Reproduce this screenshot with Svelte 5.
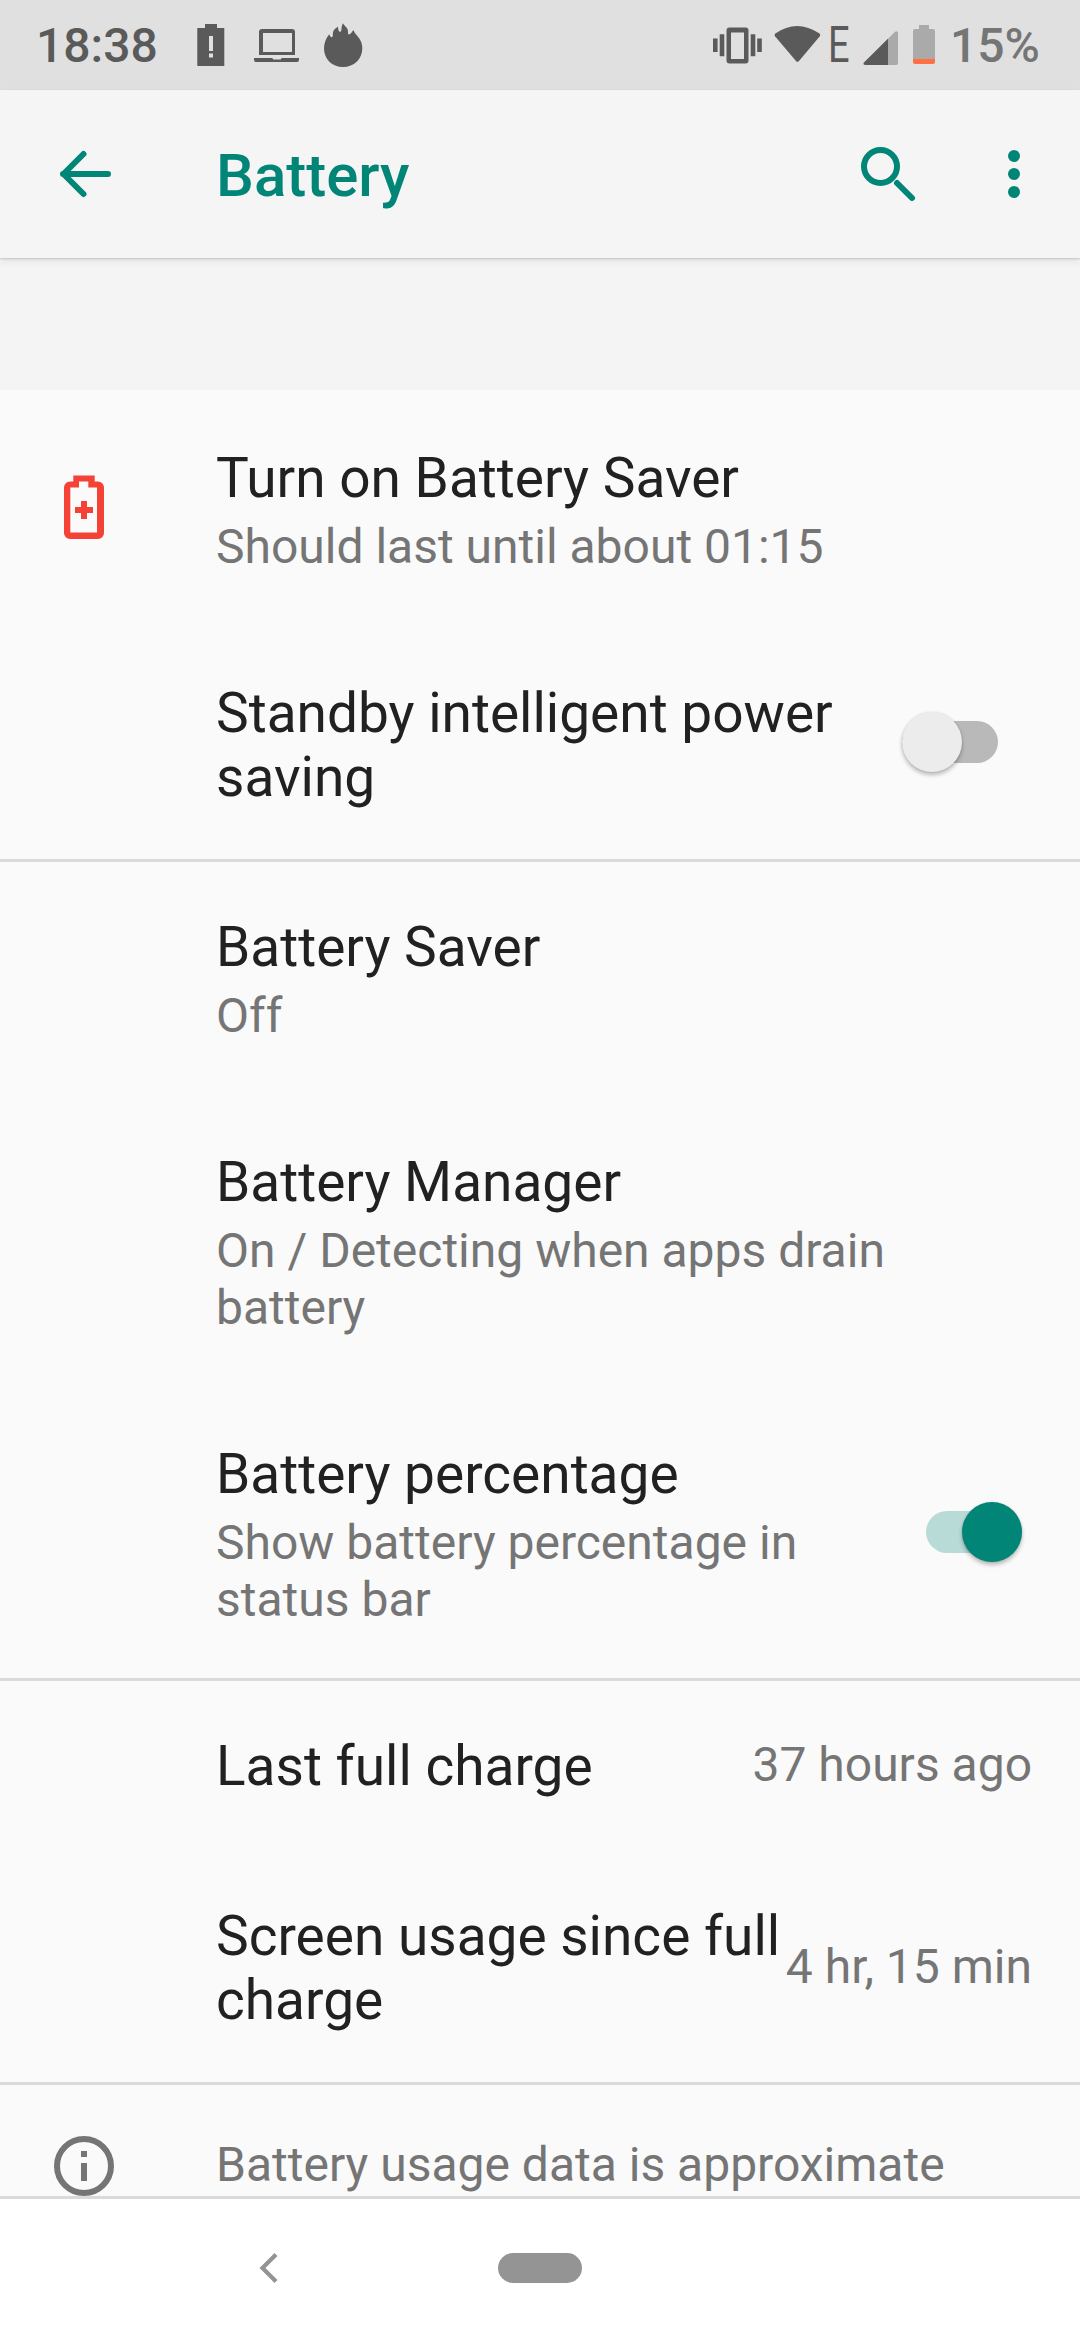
<script lang="ts">
	interface Row {
		title: string
		summary?: string
		value?: string
		icon?: string
		toggle?: boolean
		inset?: boolean
	}

	const sections: Row[][] = [
		[
			{ title: 'Turn on Battery Saver', summary: 'Should last until about 01:15', icon: 'battery' },
			{ title: 'Standby intelligent power saving', toggle: false, inset: true }
		],
		[
			{ title: 'Battery Saver', summary: 'Off' },
			{ title: 'Battery Manager', summary: 'On / Detecting when apps drain battery' },
			{ title: 'Battery percentage', summary: 'Show battery percentage in status bar', toggle: true }
		],
		[
			{ title: 'Last full charge', value: '37 hours ago' },
			{ title: 'Screen usage since full charge', value: '4 hr, 15 min' }
		]
	];
</script>

<div class="screen">
	<div class="status">
		<span class="clock">18:38</span>
		<svg width="180" height="90" viewBox="190 0 180 90" fill="#5a5a5a">
			<path fill-rule="evenodd" d="M205 24h12v4h7.300v38h-27v-38h7.700zM209 36v15h4v-15zM209 53.500v4h4v-4z" />
			<path fill-rule="evenodd" d="M262 29h30a3 3 0 0 1 3 3v23h-36v-23a3 3 0 0 1 3-3zM263 33v19h29v-19z" />
			<path d="M254 58h18.500q0 1.500 1.500 1.500h6q1.500 0 1.500-1.500h17.500v2a2 2 0 0 1-2 2h-41a2 2 0 0 1-2-2z" />
			<path d="M343 23.300C343.500 25 346.500 27 347.500 29C348.500 31.500 347.500 34.500 349 34.500C351 34 352 31.500 353.500 30C354 33 357 35 359 38C361.500 41.500 362.300 45 362.300 48.500C362.300 59 354 67 343 67C332 67 324 59 324 48.500C324 43 326 38 329.300 34.300C330 36.500 331 37.500 332.300 37C333.500 36 332 32.500 334 30C335.500 28 337 27.500 338 26.500C338 29 338.500 31.500 340 32C342.500 31.500 340.500 27.500 343 23.300z" />
		</svg>
		<div class="spacer"></div>
		<svg width="112" height="90" viewBox="712 0 112 90" fill="#5a5a5a">
			<path fill-rule="evenodd" d="M729.500 27.500h16a3 3 0 0 1 3 3v30a3 3 0 0 1-3 3h-16a3 3 0 0 1-3-3v-30a3 3 0 0 1 3-3zM731 32.500v26.500h13v-26.500z" />
			<path d="M713 38.500h4.600v13.500h-4.600zM719.700 34.300h4.600v22h-4.600zM750.700 34.300h4.600v22h-4.600zM757.200 38.500h4.600v13.500h-4.600z" />
			<path d="M775.300 33.500Q797 18.500 819.500 33.500Q820.800 34.800 819.800 36.300L799 61Q797.500 62.700 796 61L775 36.300Q774 34.800 775.300 33.500z" />
		</svg>
		<span class="network">E</span>
		<svg width="80" height="90" viewBox="860 0 80 90">
			<path fill="#aaa" d="M864 62.500L895 31.800Q898 30 898 33v30q0 2-2 2h-30q-3.500 0-2-2.500z" />
			<path fill="#5a5a5a" d="M864 62.500L888 38.700v26.300h-22q-3.500 0-2-2.500z" />
			<path fill="#aaa" d="M919 25h10v4h4q2 0 2 2v28h-22v-28q0-2 2-2h4z" />
			<path fill="#ff7043" d="M913 59h22v3q0 2-2 2h-18q-2 0-2-2z" />
		</svg>
		<span class="level">15%</span>
	</div>

	<header>
		<svg width="72" height="72" viewBox="48 138 72 72" fill="none" stroke="#008577" stroke-width="6" stroke-linecap="round" stroke-linejoin="round">
			<path d="M108 174H63M83.500 154L63.500 174L83.500 194" />
		</svg>
		<h1>Battery</h1>
		<div class="spacer"></div>
		<svg class="search" width="72" height="72" viewBox="852 138 72 72" fill="none" stroke="#008577" stroke-width="6" stroke-linecap="round">
			<circle cx="880.500" cy="166.500" r="16.500" />
			<path d="M897 183L912 198" />
		</svg>
		<svg width="36" height="72" viewBox="996 138 36 72" fill="#008577">
			<circle cx="1014" cy="156" r="6" />
			<circle cx="1014" cy="174" r="6" />
			<circle cx="1014" cy="192" r="6" />
		</svg>
	</header>

	<main>
		{#each sections as rows}
			<section>
				{#each rows as row}
					<div class="row">
						<div class="lead">
							{#if row.icon}
								<svg width="72" height="72" viewBox="0 1 72 72" fill="#f44336">
									<path fill-rule="evenodd" d="M25.300 4.500h21.400v6h3.300a6 6 0 0 1 6 6v45.500a6 6 0 0 1-6 6h-28a6 6 0 0 1-6-6v-45.500a6 6 0 0 1 6-6h3.300zM31 10.500v6h-8.700v45h26.700v-45h-8.700v-6z" />
									<path d="M33 30h6v6h6v6h-6v6h-6v-6h-6v-6h6z" />
								</svg>
							{/if}
						</div>
						<div class="text">
							<div class="title">{row.title}</div>
							{#if row.summary}
								<div class="summary">{row.summary}</div>
							{/if}
						</div>
						{#if row.value}
							<div class="value">{row.value}</div>
						{/if}
						{#if row.toggle !== undefined}
							<div class="switch" class:on={row.toggle} class:inset={row.inset}>
								<div class="thumb"></div>
							</div>
						{/if}
					</div>
				{/each}
			</section>
		{/each}
		<section class="footer">
			<div class="lead">
				<svg width="72" height="72" viewBox="0 0 72 72">
					<circle cx="36" cy="36" r="27" fill="none" stroke="#757575" stroke-width="6" />
					<path fill="#757575" d="M33 21h6v6h-6zM33 33h6v18h-6z" />
				</svg>
			</div>
			<div class="summary">Battery usage data is approximate</div>
		</section>
	</main>

	<nav>
		<svg width="24" height="36" viewBox="0 0 24 36" fill="none" stroke="#949494" stroke-width="4.200">
			<path d="M20 4.500L6.500 18L20 31.500" />
		</svg>
		<div class="home"></div>
	</nav>
</div>

<style>
	:global(body) {
		margin: 0;
	}

	.screen {
		display: flex;
		flex-direction: column;
		width: 1080px;
		height: 2340px;
		overflow: hidden;
		background: #f4f4f4;
		font-family: Roboto, sans-serif;
	}

	svg {
		display: block;
		flex: none;
	}

	.spacer {
		flex-grow: 1;
	}

	.status {
		display: flex;
		height: 90px;
		background: #e0e0e0;
		font-size: 48px;
		font-weight: 500;
		line-height: 92px;
		color: #5a5a5a;
	}

	.clock {
		width: 154px;
		padding-left: 36px;
	}

	.network {
		box-sizing: border-box;
		width: 36px;
		padding-left: 4px;
		font-size: 50px;
		font-weight: 400;
		line-height: 91px;
		transform: scaleX(0.76);
		transform-origin: 4px 0;
	}

	.level {
		width: 130px;
		padding-left: 10px;
		color: #757575;
	}

	header {
		display: flex;
		align-items: center;
		height: 168px;
		padding: 0 48px;
		background: #f5f5f5;
		box-shadow: 0 1px 2px rgba(0, 0, 0, 0.16), 0 3px 8px rgba(0, 0, 0, 0.07);
	}

	h1 {
		margin: 4px 0 0 96px;
		font-size: 60px;
		font-weight: 500;
		line-height: 70px;
		color: #008577;
	}

	.search {
		margin-right: 72px;
	}

	main {
		flex: 1;
		margin-top: 132px;
		overflow: hidden;
		background: #fafafa;
	}

	section + section {
		box-shadow: inset 0 3px #dadada;
	}

	.row {
		display: flex;
		align-items: center;
		padding-right: 48px;
	}

	.lead {
		flex: none;
		width: 168px;
		padding-left: 48px;
	}

	.text {
		flex: 1;
		padding: 56px 0 50px;
	}

	.title {
		font-size: 55px;
		line-height: 64px;
		color: #212121;
	}

	.summary {
		margin-top: 8px;
		font-size: 48px;
		line-height: 57px;
		color: #757575;
	}

	.value {
		padding-top: 3px;
		font-size: 48px;
		line-height: 57px;
		white-space: nowrap;
		color: #757575;
	}

	.switch {
		display: flex;
		align-items: center;
		width: 96px;
		height: 42px;
		margin: 0 10px 0 12px;
		border-radius: 21px;
		background: #b9b9b9;
	}

	.inset {
		margin-right: 34px;
	}

	.thumb {
		flex: none;
		width: 60px;
		height: 60px;
		border-radius: 50%;
		background: #ececec;
		box-shadow: 0 3px 4px rgba(0, 0, 0, 0.26), 0 0 2px rgba(0, 0, 0, 0.12);
	}

	.on {
		justify-content: flex-end;
		background: #b9dbd8;
	}

	.on .thumb {
		background: #008577;
	}

	.footer {
		display: flex;
		padding-top: 48px;
	}

	.footer .summary {
		margin-top: 6px;
	}

	nav {
		display: flex;
		align-items: center;
		height: 138px;
		padding: 0 0 3px 256px;
		border-top: 3px solid #dadada;
		background: #fff;
	}

	.home {
		width: 84px;
		height: 30px;
		margin-left: 218px;
		border-radius: 15px;
		background: #949494;
	}
</style>
